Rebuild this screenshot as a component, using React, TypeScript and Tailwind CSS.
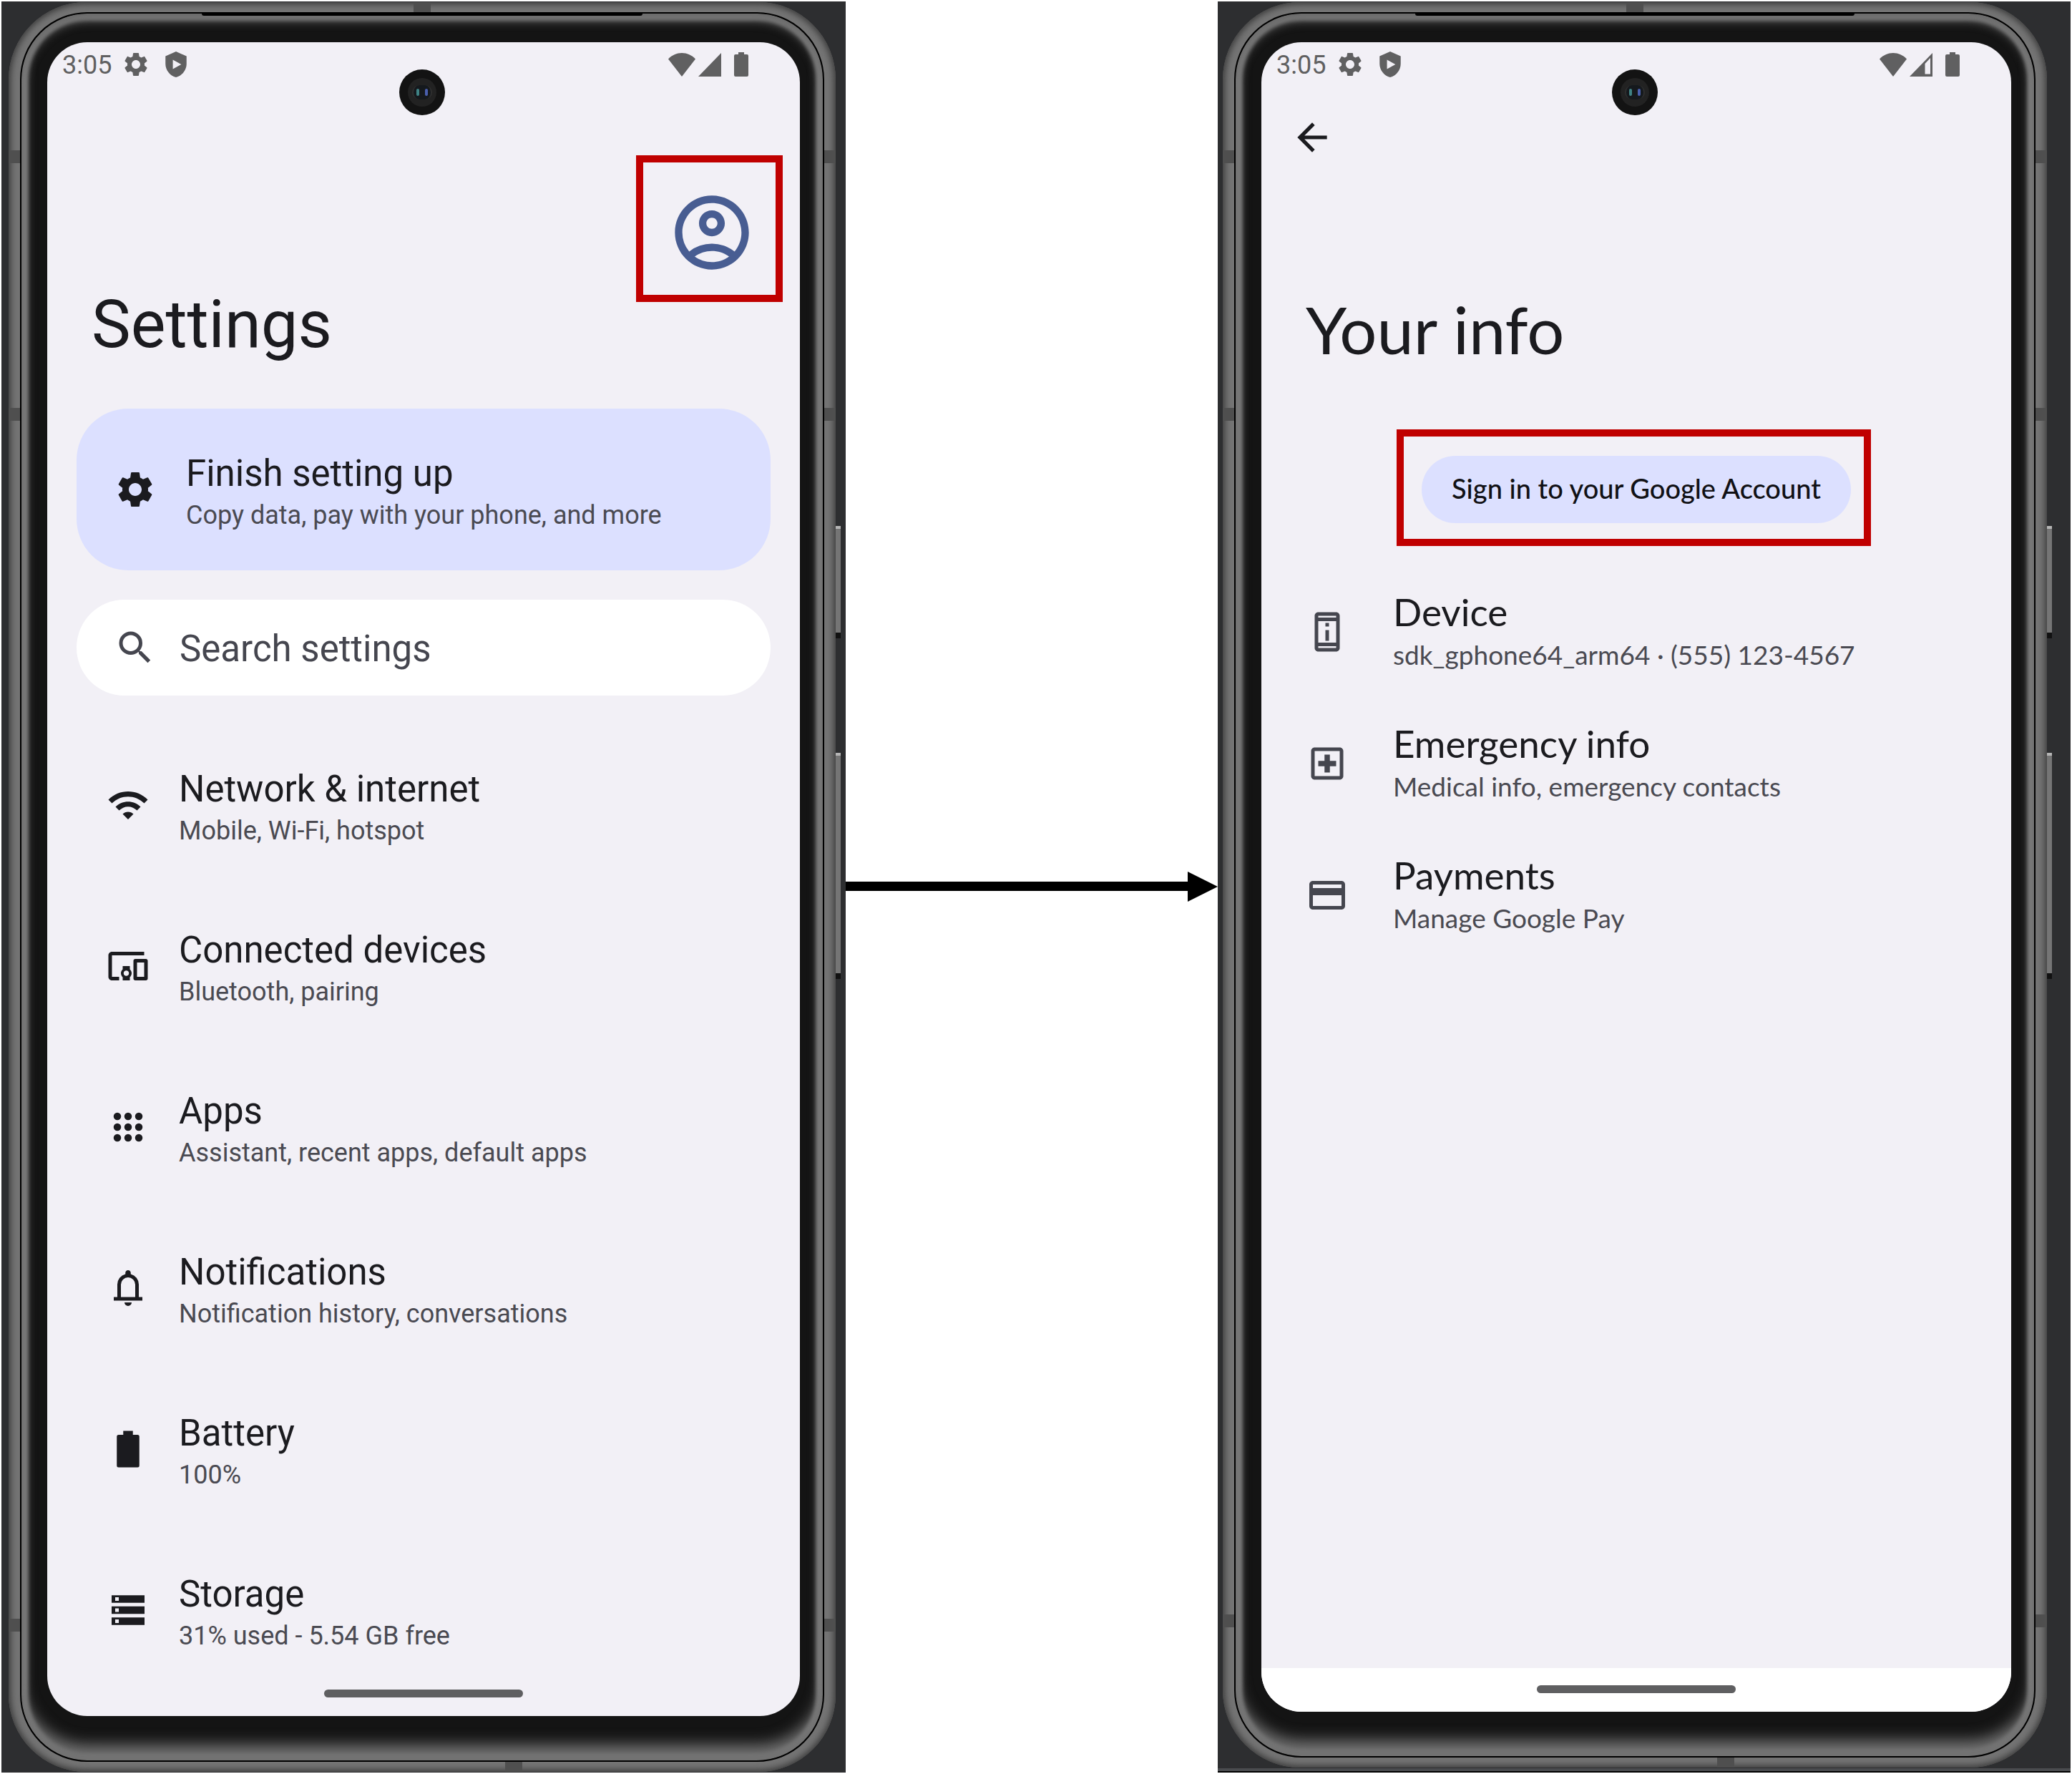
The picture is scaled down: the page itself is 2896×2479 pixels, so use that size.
import type { ReactNode } from "react";
import {
  MdArrowBack,
  MdDevicesOther,
  MdOutlineAccountCircle,
  MdOutlineCreditCard,
  MdOutlineLocalHospital,
  MdOutlinePermDeviceInformation,
  MdSearch,
  MdSettings,
  MdWifi,
} from "react-icons/md";

const ICON = "size-[60px] shrink-0";

function ShieldPlayIcon() {
  return (
    <svg viewBox="0 0 18 22" className="h-9 w-[30px]" fill="currentColor" aria-hidden="true">
      <path
        fillRule="evenodd"
        d="M9 0L0 4v6.5c0 5.3 3.8 10.2 9 11.5 5.2-1.300 9-6.200 9-11.500V4L9 0zM6.300 7v8l7.200-4z"
      />
    </svg>
  );
}

function WifiFullIcon() {
  return (
    <svg viewBox="0 0 38 33" className="h-[33px] w-[38px]" fill="currentColor" aria-hidden="true">
      <path d="M0 8.500C5 3 12 0 19 0s14 3 19 8.500L19 33z" />
    </svg>
  );
}

function SignalIcon({ partial }: { partial?: boolean }) {
  return (
    <svg viewBox="0 0 32 33" className="h-[33px] w-8" fill="currentColor" aria-hidden="true">
      <path fillRule="evenodd" d={partial ? "M0 33L32 0v33zM21.500 15v14.500H29V7z" : "M0 33L32 0v33z"} />
    </svg>
  );
}

function BatterySmallIcon() {
  return (
    <svg viewBox="0 0 20 34" className="h-[34px] w-5" fill="currentColor" aria-hidden="true">
      <path d="M6 0h8v3h4a2 2 0 0 1 2 2v27a2 2 0 0 1-2 2H2a2 2 0 0 1-2-2V5a2 2 0 0 1 2-2h4z" />
    </svg>
  );
}

function AppsIcon() {
  const at = [6, 12, 18];
  return (
    <svg viewBox="0 0 24 24" className={ICON} fill="currentColor" aria-hidden="true">
      {at.map((y) => at.map((x) => <circle key={`${x}-${y}`} cx={x} cy={y} r="2.1" />))}
    </svg>
  );
}

function BellIcon() {
  return (
    <svg viewBox="0 0 24 24" className={ICON} fill="currentColor" aria-hidden="true">
      <path d="M4 19v-2h2v-7q0-2.075 1.250-3.688T10.500 4.200v-.7q0-.625.438-1.063T12 2t1.063.438T13.500 3.500v.7q2 .5 3.250 2.113T18 10v7h2v2zm8 3q-.825 0-1.412-.587T10 20h4q0 .825-.587 1.413T12 22m-4-5h8v-7q0-1.650-1.175-2.825T12 6T9.175 7.175T8 10z" />
    </svg>
  );
}

function BatteryIcon() {
  return (
    <svg viewBox="0 0 24 24" className={ICON} fill="currentColor" aria-hidden="true">
      <path d="M9.300 1.800h5.400V4h2.600a1 1 0 0 1 1 1v16.200a1 1 0 0 1-1 1H6.700a1 1 0 0 1-1-1V5a1 1 0 0 1 1-1h2.600z" />
    </svg>
  );
}

function StorageIcon() {
  return (
    <svg viewBox="0 0 24 24" className={ICON} fill="currentColor" aria-hidden="true">
      <path
        fillRule="evenodd"
        d="M2.800 3.700h18.400v4.200H2.800zM4.800 4.800v2h2v-2zM2.800 9.900h18.400v4.200H2.800zM4.800 11v2h2v-2zM2.800 16.100h18.400v4.200H2.800zM4.800 17.200v2h2v-2z"
      />
    </svg>
  );
}

function StatusBar({ partialSignal }: { partialSignal?: boolean }) {
  return (
    <div className="flex h-16 items-center justify-between pr-[72px] pb-0.5 pl-[21px] text-[#606061]">
      <div className="flex items-center">
        <span className="pt-0.5 font-[Roboto,sans-serif] text-[36px] leading-[44px]">3:05</span>
        <MdSettings className="ml-3.5 size-10" />
        <span className="ml-[21px]">
          <ShieldPlayIcon />
        </span>
      </div>
      <div className="flex items-center">
        <WifiFullIcon />
        <span className="ml-1">
          <SignalIcon partial={partialSignal} />
        </span>
        <span className="ml-[18px]">
          <BatterySmallIcon />
        </span>
      </div>
    </div>
  );
}

function Camera() {
  return (
    <div className="absolute inset-x-0 top-[38px] flex justify-center pr-1">
      <div className="flex size-16 items-center justify-center rounded-full bg-[#131313]">
        <div className="flex size-10 items-center justify-center rounded-full bg-[#222222]">
          <div className="flex h-5 w-7 items-center justify-center gap-2 rounded-full border-x-2 border-[#2f2f2f] bg-[#15191d]">
            <span className="h-2.5 w-1 rounded-full bg-[#3f8385]" />
            <span className="h-2.5 w-1 rounded-full bg-[#4a5fae]" />
          </div>
        </div>
      </div>
    </div>
  );
}

function SideKey({ className }: { className: string }) {
  return (
    <div
      className={`absolute left-full w-[7px] border-t-4 border-b-8 border-t-[#b5b5b5] border-b-[#111111] bg-[#757575] ${className}`}
    />
  );
}

function Band({ className }: { className: string }) {
  return <div className={`absolute bg-[#4f4f4f] ${className}`} />;
}

function Phone({ className, children }: { className: string; children: ReactNode }) {
  return (
    <div className={`flex grow flex-col bg-[#2d2e30] ${className}`}>
      <div className="relative flex grow flex-col rounded-[108px] bg-[#747474] px-4 py-3.5 shadow-[inset_0_0_8px_3px_#3c3c3c]">
        <Band className="top-[207px] left-0 h-[18px] w-[17px]" />
        <Band className="top-[207px] right-0 h-[18px] w-[17px]" />
        <Band className="top-[567px] left-0 h-[18px] w-[17px]" />
        <Band className="top-[567px] right-0 h-[18px] w-[17px]" />
        <Band className="bottom-[196px] left-0 h-[18px] w-[17px]" />
        <Band className="right-0 bottom-[196px] h-[18px] w-[17px]" />
        <Band className="top-0 left-[49%] h-[15px] w-6" />
        <Band className="bottom-0 left-[60%] h-[15px] w-6" />
        <SideKey className="top-[732px] h-[157px]" />
        <SideKey className="top-[1049px] h-[316px]" />
        <div className="relative flex grow flex-col rounded-[94px] border-2 border-black bg-[#141414] pt-10 pr-8 pb-[62px] pl-9 shadow-[inset_0_-22px_20px_0_#727272,inset_0_6px_14px_4px_#6a6a6a,inset_0_0_5px_9px_#8c8c8c]">
          <div className="absolute inset-x-0 top-0 flex justify-center">
            <div className="h-[3px] w-[55%] rounded-b-sm bg-black" />
          </div>
          <div className="relative flex grow flex-col overflow-hidden rounded-[56px] bg-[#f2f0f6]">{children}</div>
        </div>
      </div>
    </div>
  );
}

function HomePill() {
  return <div className="h-[11px] w-[278px] rounded-full bg-[#5f5f61]" />;
}

function SettingsRow({ icon, title, note }: { icon: ReactNode; title: string; note: string }) {
  return (
    <li className="flex items-center gap-[41px] text-[#1b1b1f]">
      {icon}
      <div className="pt-0.5">
        <p className="text-[51px] leading-[70px]">{title}</p>
        <p className="text-[36px] leading-[46px] text-[#4a4a52]">{note}</p>
      </div>
    </li>
  );
}

function InfoRow({ icon, title, note }: { icon: ReactNode; title: string; note: string }) {
  return (
    <li className="flex items-center gap-[62px] text-[#1b1b1f]">
      <span className="pt-1.5 text-[#45464f]">{icon}</span>
      <div>
        <p className="text-[53px] leading-[70px]">{title}</p>
        <p className="text-[37px] leading-[50px] text-[#4a4a52]">{note}</p>
      </div>
    </li>
  );
}

function SettingsScreen() {
  return (
    <Phone className="pt-px pr-3.5 pb-px pl-2.5">
      <Camera />
      <StatusBar />
      <div className="flex grow flex-col font-[Roboto,sans-serif]">
        <div className="flex justify-end pt-[140px] pr-[61px]">
          <button type="button" aria-label="Your profile" className="relative text-[#485d92]">
            <MdOutlineAccountCircle className="size-[124px]" />
            <span className="absolute -top-[46px] -right-[37px] -bottom-[35px] -left-11 border-[10px] border-[#c00000]" />
          </button>
        </div>
        <h1 className="mt-[21px] pl-[62px] text-[92px] leading-[92px] text-[#1b1b1f]">Settings</h1>
        <button
          type="button"
          className="mx-[41px] mt-[71px] flex h-[226px] items-center gap-[41px] rounded-[72px] bg-[#dce0ff] pl-[52px] text-left text-[#1b1b1f]"
        >
          <MdSettings className={ICON} />
          <span className="block pt-0.5">
            <span className="block text-[51px] leading-[70px]">Finish setting up</span>
            <span className="block text-[36px] leading-[46px] text-[#4a4a52]">
              Copy data, pay with your phone, and more
            </span>
          </span>
        </button>
        <label className="mx-[41px] mt-[41px] flex h-[134px] items-center gap-8 rounded-full bg-white pl-[52px] text-[#45464f]">
          <MdSearch className={ICON} />
          <input
            type="text"
            aria-label="Search settings"
            placeholder="Search settings"
            className="w-full bg-transparent pt-[3px] pr-12 text-[51px] leading-[72px] outline-none placeholder:text-[#45464f]"
          />
        </label>
        <ul className="mt-[94px] flex flex-col gap-[107px] pl-[83px]">
          <SettingsRow icon={<MdWifi className={ICON} />} title="Network &amp; internet" note="Mobile, Wi-Fi, hotspot" />
          <SettingsRow icon={<MdDevicesOther className={ICON} />} title="Connected devices" note="Bluetooth, pairing" />
          <SettingsRow icon={<AppsIcon />} title="Apps" note="Assistant, recent apps, default apps" />
          <SettingsRow icon={<BellIcon />} title="Notifications" note="Notification history, conversations" />
          <SettingsRow icon={<BatteryIcon />} title="Battery" note="100%" />
          <SettingsRow icon={<StorageIcon />} title="Storage" note="31% used - 5.54 GB free" />
        </ul>
        <div className="mt-auto flex justify-center pt-10 pb-[26px]">
          <HomePill />
        </div>
      </div>
    </Phone>
  );
}

function YourInfoScreen() {
  return (
    <Phone className="pt-px pr-[33px] pb-px pl-[7px]">
      <Camera />
      <StatusBar partialSignal />
      <div className="flex grow flex-col font-[Lato,sans-serif]">
        <div className="pt-[38px] pl-10">
          <button type="button" aria-label="Back" className="block text-[#1b1b1f]">
            <MdArrowBack className="size-[62px]" />
          </button>
        </div>
        <h1 className="mt-[191px] pl-[62px] text-[92px] leading-[92px] text-[#1b1b1f]">Your info</h1>
        <div className="mt-[131px] flex justify-center">
          <button
            type="button"
            className="relative h-[94px] w-[600px] rounded-full bg-[#dce0ff] pb-1 text-[38px] leading-[48px] font-medium text-[#111115]"
          >
            Sign in to your Google Account
            <span className="absolute -top-[37px] -right-7 -bottom-8 -left-[35px] border-[10px] border-[#c00000]" />
          </button>
        </div>
        <ul className="mt-[89px] flex flex-col gap-16 pl-[62px]">
          <InfoRow
            icon={<MdOutlinePermDeviceInformation className={ICON} />}
            title="Device"
            note="sdk_gphone64_arm64 · (555) 123-4567"
          />
          <InfoRow
            icon={<MdOutlineLocalHospital className={ICON} />}
            title="Emergency info"
            note="Medical info, emergency contacts"
          />
          <InfoRow icon={<MdOutlineCreditCard className={ICON} />} title="Payments" note="Manage Google Pay" />
        </ul>
        <div className="mt-auto flex h-[61px] items-center justify-center bg-white pb-0.5">
          <HomePill />
        </div>
      </div>
    </Phone>
  );
}

export default function App() {
  return (
    <main className="grid min-h-screen grid-cols-[1180fr_520fr_1192fr] bg-white p-0.5">
      <section aria-label="Settings" className="flex flex-col">
        <SettingsScreen />
      </section>
      <div className="flex items-center pb-0.5">
        <div className="h-[13px] grow bg-black" />
        <svg viewBox="0 0 42 42" className="size-[42px] shrink-0" aria-hidden="true">
          <path d="M0 0L42 21L0 42z" />
        </svg>
      </div>
      <section aria-label="Your info" className="flex flex-col">
        <YourInfoScreen />
        <div className="h-1 bg-[#4a4c4f]" />
        <div className="h-0.5 bg-black" />
      </section>
    </main>
  );
}
